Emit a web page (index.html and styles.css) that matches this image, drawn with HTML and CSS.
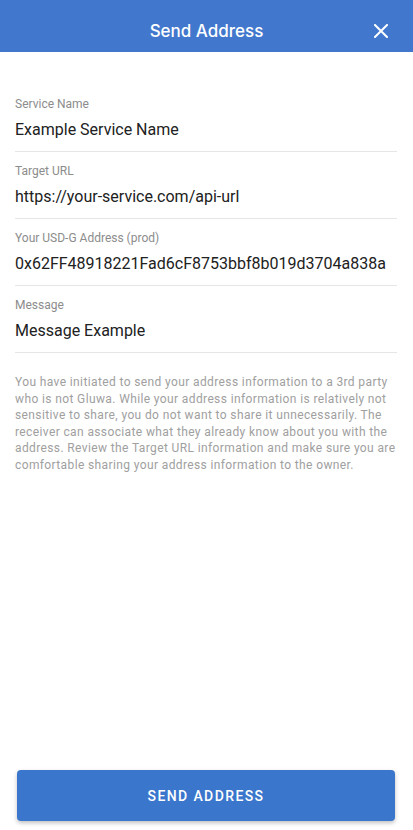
FILE: index.html
```html
<!DOCTYPE html>
<html>
<head>
<meta charset="utf-8">
<link rel="stylesheet" href="styles.css">
</head>
<body>
<div class="screen">
  <header class="topbar">
    <div class="title">Send Address</div>
    <button class="close" aria-label="Close">
      <svg width="14" height="14" viewBox="0 0 14 14"><path d="M1 1L13 13M13 1L1 13" stroke="#fff" stroke-width="2" stroke-linecap="square"/></svg>
    </button>
  </header>
  <main class="content">
    <div class="field">
      <div class="label">Service Name</div>
      <div class="value">Example Service Name</div>
    </div>
    <div class="field">
      <div class="label">Target URL</div>
      <div class="value">https://your-service.com/api-url</div>
    </div>
    <div class="field">
      <div class="label">Your USD-G Address (prod)</div>
      <div class="value">0x62FF48918221Fad6cF8753bbf8b019d3704a838a</div>
    </div>
    <div class="field">
      <div class="label">Message</div>
      <div class="value">Message Example</div>
    </div>
    <p class="notice">You have initiated to send your address information to a 3rd party who is not Gluwa. While your address information is relatively not sensitive to share, you do not want to share it unnecessarily. The receiver can associate what they already know about you with the address. Review the Target URL information and make sure you are comfortable sharing your address information to the owner.</p>
  </main>
  <footer class="footer">
    <button class="send">SEND ADDRESS</button>
  </footer>
</div>
</body>
</html>
```
FILE: styles.css
```css
html, body {
  margin: 0;
  padding: 0;
  background: #fff;
}
.screen {
  width: 413px;
  height: 830px;
  display: flex;
  flex-direction: column;
  font-family: Roboto, "Noto Sans", sans-serif;
}
.topbar {
  height: 52px;
  background: #4178cd;
  display: flex;
  align-items: center;
  justify-content: center;
  position: relative;
  flex-shrink: 0;
}
.title {
  color: #fff;
  font-family: Inter, "Liberation Sans", sans-serif;
  font-size: 17px;
  font-weight: 500;
  margin-top: 10px;
}
.close {
  position: absolute;
  right: 25px;
  top: 24px;
  background: none;
  border: 0;
  padding: 0;
  width: 14px;
  height: 14px;
  display: flex;
}
.content {
  flex: 1;
  padding: 33px 16px 0 15px;
}
.field {
  border-bottom: 1px solid #e6e6e6;
  padding-top: 12px;
  height: 54px;
}
.label {
  font-size: 12px;
  color: #8c8c8c;
  line-height: 14px;
}
.value {
  font-size: 16px;
  color: #212121;
  line-height: 20px;
  margin-top: 9px;
  white-space: nowrap;
}
.notice {
  margin: 21px 0 0;
  font-size: 12px;
  line-height: 16.6px;
  color: #a0a0a0;
  letter-spacing: 0.38px;
}
.footer {
  padding: 0 18px 9px 17px;
  flex-shrink: 0;
}
.send {
  width: 100%;
  height: 51px;
  background: #3a76cc;
  border: 0;
  border-radius: 4px;
  color: #fff;
  font-family: Roboto, sans-serif;
  font-weight: 500;
  font-size: 14px;
  letter-spacing: 1.4px;
  box-shadow: 0 2px 4px rgba(0,0,0,0.25);
}
```
